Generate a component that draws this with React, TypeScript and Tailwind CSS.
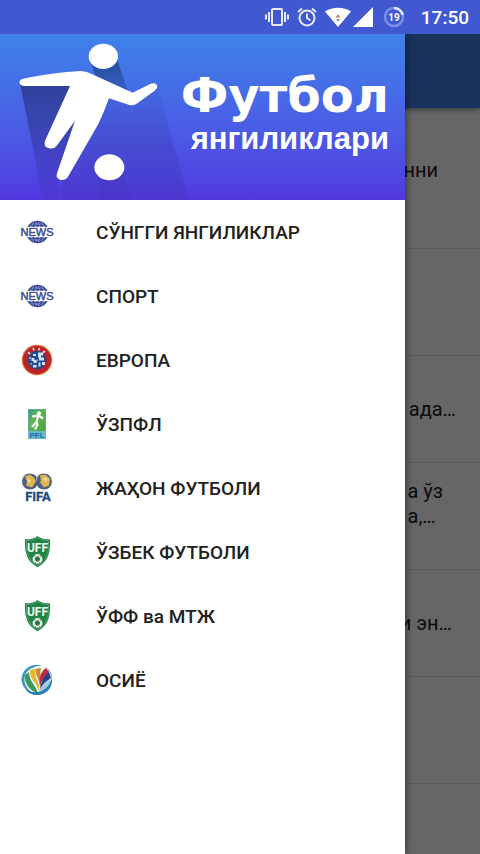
import type { ReactNode } from "react";

const articles = [
  { lines: ["нни"], end: "pr-[42px]", tall: true },
  { lines: [], end: "pr-6" },
  { lines: ["ада…"], end: "pr-6" },
  { lines: ["а ўз", "а,…"], end: "pr-[37px]", tall: true },
  { lines: ["и эн…"], end: "pr-7" },
  { lines: [], end: "pr-6" },
  { lines: [], end: "pr-6" },
];

function NewsIcon() {
  return (
    <svg viewBox="0 0 32 32" className="size-8 shrink-0 overflow-visible" aria-hidden="true">
      <g fill="none" stroke="#46529f" strokeWidth="1.700">
        <circle cx="16.500" cy="16" r="10.500" fill="#c5cce8" />
        <ellipse cx="16.500" cy="16" rx="5" ry="10.500" />
        <path d="M16.500 5.500v21M8.500 9.300h16M8.500 22.700h16" />
      </g>
      <rect x="0" y="11" width="33" height="10" fill="#fff" />
      <text
        x="16"
        y="20"
        textAnchor="middle"
        fontSize="11"
        fontWeight="400"
        fontFamily="Liberation Sans, sans-serif"
        fill="#414e9a"
        stroke="#414e9a"
        strokeWidth=".5"
      >
        NEWS
      </text>
    </svg>
  );
}

function UefaIcon() {
  return (
    <svg viewBox="0 0 32 32" className="size-8 shrink-0" aria-hidden="true">
      <circle cx="16" cy="16" r="15.200" fill="#d9703a" />
      <circle cx="16" cy="16" r="14" fill="#bd2226" />
      <circle cx="16" cy="16" r="9.300" fill="#234a8c" />
      <g stroke="#f3d9d2" strokeWidth="1.800">
        <path d="M7 8.200l2 1.800M12 4.200l1 2.300M18.300 4l-.6 2.500M23.800 6.800l-1.800 2" />
      </g>
      <path
        d="M12 10h3v2h-3zM17 8.500h5v3h-2v2h3v3h-5v-3h-1zM10.500 14h3v2h2v3h-3v-2h-2zM17.500 18.500h2v4h-2zM21 18h3v3h-3zM12 21h3.500v2.500H12z"
        fill="#d4e1f0"
      />
      <path d="M8 13h2v2H8zM15 15.500h2v2h-2zM9 19h2v1.500H9z" fill="#89a9d2" />
    </svg>
  );
}

function PflIcon() {
  return (
    <svg viewBox="0 0 32 32" className="size-8 shrink-0 overflow-visible" aria-hidden="true">
      <defs>
        <linearGradient id="pfl" x1="0" y1="0" x2="1" y2="1">
          <stop offset="0" stopColor="#2e9ba3" />
          <stop offset=".35" stopColor="#62b54b" />
          <stop offset="1" stopColor="#44a747" />
        </linearGradient>
      </defs>
      <rect x="7" y="1" width="18" height="30" fill="#5ea99c" />
      <rect x="8" y="2" width="16" height="21" fill="url(#pfl)" />
      <rect x="7" y="23" width="18" height="8" fill="#68b7cf" />
      <circle cx="18" cy="5.200" r="2" fill="#fff" />
      <path
        d="M11 8.500l6-1 2.200 1 2.800 2M17 8.500l-1.500 5.500-4.500 5M15.500 14l1 3-2.500 4.500"
        fill="none"
        stroke="#fff"
        strokeWidth="2.200"
      />
      <text
        x="16"
        y="30"
        textAnchor="middle"
        fontSize="8"
        fontWeight="700"
        fontFamily="Liberation Sans, sans-serif"
        fill="#276fa0"
      >
        PFL
      </text>
    </svg>
  );
}

function FifaIcon() {
  return (
    <svg viewBox="0 0 32 32" className="size-8 shrink-0 overflow-visible" aria-hidden="true">
      <circle cx="9" cy="9.500" r="8" fill="#4d5f83" />
      <circle cx="23" cy="9.500" r="8" fill="#4d5f83" />
      <path d="M4 4.500l5-2 4 3 2 4-4 6-6-2 1-4zM19 3.500l5-1 5 4-1 7-5 2-4-5 1-2z" fill="#dfb650" />
      <path d="M6 6.500l4 2-2 3zM22 6.500l4-1-1 5z" fill="#f3df9c" />
      <path d="M1.500 6.500a8 8 0 0 1 4-4.500M15.500 8.500a8 8 0 0 1 4-7" fill="none" stroke="#a9b2c4" />
      <text
        x="17"
        y="29"
        textAnchor="middle"
        fontSize="13"
        fontWeight="700"
        fontFamily="Roboto, sans-serif"
        fill="#1c4a86"
        stroke="#1c4a86"
        strokeWidth=".3"
      >
        FIFA
      </text>
    </svg>
  );
}

function UffIcon() {
  return (
    <svg viewBox="0 0 32 32" className="size-8 shrink-0 overflow-visible" aria-hidden="true">
      <path
        d="M16.500 0c3 2.500 7 3.500 12.500 3.300.5 12-1 22-12.500 28C5 25.300 3.500 15.300 4 3.300 9.500 3.500 13.500 2.500 16.500 0z"
        fill="#218344"
      />
      <path
        d="M16.500 1.600c3 2 7 3 11.300 3 .2 10-1.300 19.900-11.300 25.400C6.500 24.500 5 14.600 5.200 4.600c4.300 0 8.300-1 11.300-3z"
        fill="none"
        stroke="#5baa72"
        strokeWidth=".8"
      />
      <text
        x="16.500"
        y="16"
        textAnchor="middle"
        fontSize="12"
        fontWeight="700"
        fontFamily="Roboto, sans-serif"
        fill="#f2fbf2"
      >
        UFF
      </text>
      <circle cx="16.500" cy="23" r="5" fill="#e5efe4" />
      <path
        d="M16.500 20.600l2.300 1.600-.9 2.700h-2.800l-.9-2.700zM12.500 21l1.500-1.700M20.500 21L19 19.300M14 26.500l1 .8M19 26.500l-1 .8"
        fill="#2c6d43"
        stroke="#2c6d43"
      />
    </svg>
  );
}

function AfcIcon() {
  return (
    <svg viewBox="0 0 32 32" className="size-8 shrink-0" aria-hidden="true">
      <circle cx="16" cy="16" r="15" fill="#f3f8fb" />
      <path d="M1 12C3 4 12-1 21 1.500 13 2 7 5 4 11c-2 7 1 14 8 18C4 27-1 20 1 12z" fill="#3f93bd" />
      <path d="M4 11c-1 8 4 15 13 19C16 22 8 18 8 8z" fill="#3d9a5a" />
      <path d="M9 6c-1 9 7 12 9 22 2-9-5-13-4-23z" fill="#e6b72f" />
      <path d="M14.500 5c-1 7 5 10 4.500 19 3-8-1-12 1-20z" fill="#c78d3b" />
      <path d="M25 4c-6 4-7 10-6 19 1-7 5-11 9-15z" fill="#c4283f" />
      <path d="M28 8c-6 4-8 10-9 18 3-7 7-9 11-12z" fill="#263f8d" />
      <path d="M31 14c1 9-5 17-15 17-5 0-9-2-12-6 12 7 22 2 27-11z" fill="#2480b4" />
      <path d="M24 2.500c5 3 8 8 7 13.500-.5-5-3-10-7-13.500z" fill="#62a9ca" />
      <path d="M30 15c-5 2-9 6-12 12 7-1 11-6 12-12z" fill="#9ecbe0" />
    </svg>
  );
}

const menu: { label: string; icon: ReactNode }[] = [
  { label: "СЎНГГИ ЯНГИЛИКЛАР", icon: <NewsIcon /> },
  { label: "СПОРТ", icon: <NewsIcon /> },
  { label: "ЕВРОПА", icon: <UefaIcon /> },
  { label: "ЎЗПФЛ", icon: <PflIcon /> },
  { label: "ЖАҲОН ФУТБОЛИ", icon: <FifaIcon /> },
  { label: "ЎЗБЕК ФУТБОЛИ", icon: <UffIcon /> },
  { label: "ЎФФ ва МТЖ", icon: <UffIcon /> },
  { label: "ОСИЁ", icon: <AfcIcon /> },
];

function StatusBar() {
  return (
    <div className="flex h-[34px] shrink-0 items-center justify-end bg-[#4059d1] pr-[11px] text-white">
      <svg viewBox="0 0 24 20" className="h-5 w-6" fill="none" stroke="#e4e9fb" strokeWidth="2">
        <rect x="7" y="2" width="10" height="16" rx="1" />
        <path d="M4 5v10M1 7.500v5M20 5v10M23 7.500v5" />
      </svg>
      <svg viewBox="0 0 20 20" className="ml-2 size-5" fill="none" stroke="#e4e9fb" strokeWidth="2">
        <circle cx="10" cy="11" r="7.500" />
        <path d="M10 6.500V11l3.500 2.500M1 5l4-3.500M19 5l-4-3.500" />
      </svg>
      <svg viewBox="0 0 26 20" className="ml-2 h-5 w-[26px]">
        <path d="M0 4.500C8-.5 18-.5 26 4.500L13 20z" fill="#fff" />
        <path d="M13 7l2.500 3.500h-5z" fill="#b8836d" />
        <path d="M13 15l2-3h-4z" fill="#8a91a8" />
      </svg>
      <svg viewBox="0 0 20 20" className="ml-0.5 size-5">
        <path d="M20 0v20H0z" fill="#fff" />
      </svg>
      <svg viewBox="0 0 22 22" className="ml-2.5 size-[22px]">
        <circle cx="11" cy="11" r="9" fill="none" stroke="#7e90e2" strokeWidth="2.500" />
        <path d="M11 2a9 9 0 0 1 8.700 7" fill="none" stroke="#e4e9fb" strokeWidth="2.500" />
        <text
          x="11"
          y="14.500"
          textAnchor="middle"
          fontSize="10"
          fontWeight="700"
          fontFamily="Roboto, sans-serif"
          fill="#fff"
        >
          19
        </text>
      </svg>
      <time className="ml-4 pt-0.5 text-[19px] font-medium">17:50</time>
    </div>
  );
}

function Footballer() {
  return (
    <svg viewBox="0 12 480 498" className="h-full w-40 shrink-0 overflow-visible" aria-hidden="true">
      <defs>
        <linearGradient id="shade" x1="0" y1="150" x2="0" y2="510" gradientUnits="userSpaceOnUse">
          <stop offset="0" stopColor="#25307c" stopOpacity=".75" />
          <stop offset=".45" stopColor="#2b2f8a" stopOpacity=".5" />
          <stop offset="1" stopColor="#4a35c0" stopOpacity=".3" />
        </linearGradient>
        <linearGradient id="shadeRight" x1="0" y1="170" x2="0" y2="510" gradientUnits="userSpaceOnUse">
          <stop offset="0" stopColor="#3347a8" stopOpacity=".1" />
          <stop offset=".5" stopColor="#3737a8" stopOpacity=".3" />
          <stop offset="1" stopColor="#4432b8" stopOpacity=".35" />
        </linearGradient>
        <linearGradient id="shadeHead" x1="0" y1="100" x2="0" y2="240" gradientUnits="userSpaceOnUse">
          <stop offset="0" stopColor="#25509c" />
          <stop offset="1" stopColor="#3450b4" stopOpacity=".3" />
        </linearGradient>
      </defs>
      <path d="M60 160L215 160 225 272 171 430 183 510 130 510z" fill="url(#shade)" />
      <path d="M325 205L400 222 472 170 567 510H183L190 440z" fill="url(#shadeRight)" />
      <path d="M270 90L352 90 385 188 290 150z" fill="url(#shadeHead)" />
      <path d="M288 420L370 425 392 510H300z" fill="#4130a8" opacity=".15" />
      <ellipse cx="310" cy="79" rx="44" ry="38" fill="#fff" />
      <path
        d="M70 146C125 134 190 126 242 123Q258 123 275 132L398 188 452 161Q468 156 472 168 473 176 464 182L412 220Q400 229 386 224L327 205Q314 242 295 282L207 435Q200 452 182 450 166 446 171 430L225 272 172 345Q163 358 147 355 129 349 135 332L210 168H74Q58 167 58 155 60 148 70 146z"
        fill="#fff"
      />
      <ellipse cx="328" cy="412" rx="45" ry="39" fill="#fff" />
    </svg>
  );
}

function Drawer() {
  return (
    <nav className="mr-[75px] flex min-w-0 flex-1 flex-col bg-white shadow-[0_0_8px_rgba(0,0,0,0.6)]">
      <header className="flex h-[166px] justify-between bg-linear-to-b from-[#3d82e9] to-[#5038e0] pr-4">
        <Footballer />
        <div className="flex flex-col items-end pt-[31px] font-bold whitespace-nowrap text-white">
          <h1 className="font-['DejaVu_Sans',sans-serif] text-[48px] leading-[60px]">Футбол</h1>
          <p className="font-['Liberation_Sans',sans-serif] text-[31px] leading-7">янгиликлари</p>
        </div>
      </header>
      <ul>
        {menu.map((item) => (
          <li key={item.label}>
            <a
              href="#"
              className="flex h-16 items-center gap-[43px] pl-[21px] text-[19px] font-medium text-[#212121]"
            >
              {item.icon}
              <span className="pt-0.5">{item.label}</span>
            </a>
          </li>
        ))}
      </ul>
    </nav>
  );
}

export default function App() {
  return (
    <div className="flex h-screen flex-col overflow-hidden font-['Roboto',sans-serif]">
      <StatusBar />
      <div className="relative flex-1 overflow-hidden bg-white">
        <div className="h-[74px] bg-[#417fe8] shadow-[0_2px_5px_rgba(0,0,0,0.4)]" />
        <main className="pt-[34px]">
          {articles.map((article, i) => (
            <article
              key={i}
              className={`flex h-[107px] items-center justify-end border-b border-[#e4e4e4] text-xl leading-[25px] text-[#222] ${article.end}`}
            >
              <div className={article.tall ? "min-h-[75px]" : ""}>
                {article.lines.map((line) => (
                  <p key={line}>{line}</p>
                ))}
              </div>
            </article>
          ))}
        </main>
        {/* scrim and drawer sit over the article list */}
        <div className="absolute inset-0 flex bg-black/60">
          <Drawer />
        </div>
      </div>
    </div>
  );
}
